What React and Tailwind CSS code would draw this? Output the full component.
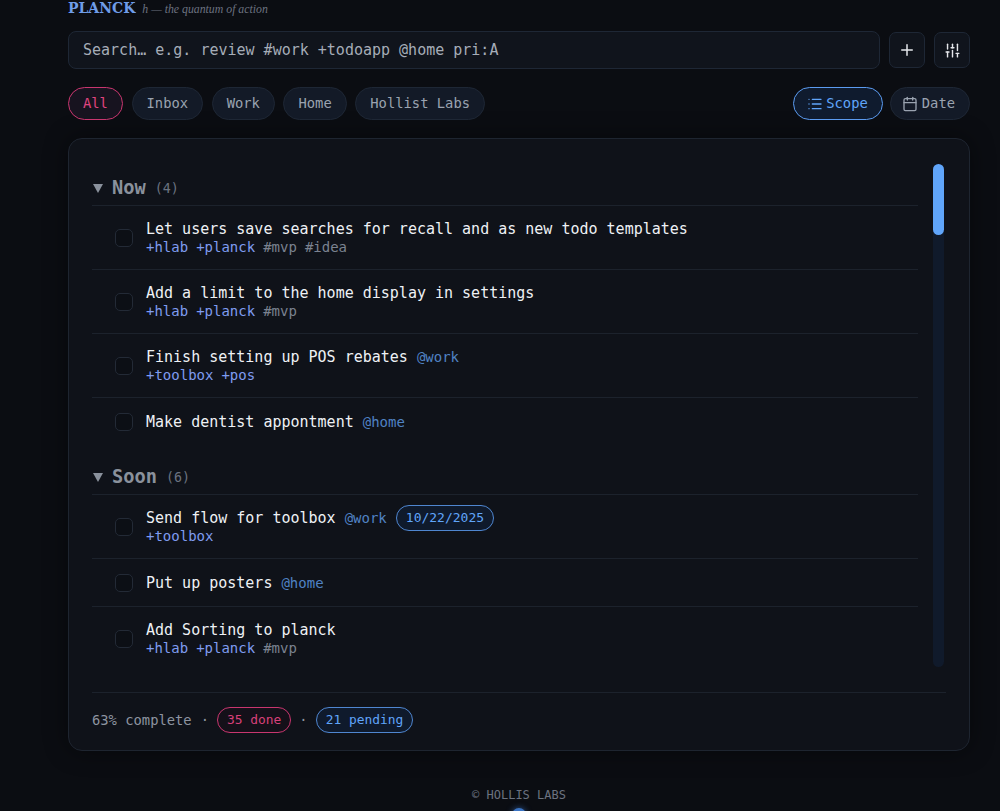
import React from "react";
import { Plus, SlidersVertical, List, Calendar } from "lucide-react";

const mono = "font-['DejaVu_Sans_Mono',monospace]";

function Filter({ children, active }) {
  return (
    <div
      className={
        "h-[33px] px-[14px] flex items-center rounded-full border text-[13.8px] " +
        (active
          ? "border-[#c9366f] bg-[#17131f] text-[#e0447f]"
          : "border-[#1e2735] bg-[#131a27] text-[#9aa3b0]")
      }
    >
      {children}
    </div>
  );
}

function Row({ title, ctx, date, meta, last }) {
  return (
    <div className={"flex items-center gap-[13px] pl-[23px] " + (meta ? "h-[64px] " : "h-[48px] ") + (last ? "" : "border-b border-[#1c222c]")}>
      <div className="w-[18px] h-[18px] rounded-[5px] border border-[#232a36] bg-[#0c0f15] shrink-0" />
      <div className="min-w-0">
        <div className="flex items-center text-[15px] leading-[20px] text-[#eef1f5] whitespace-pre">
          <span>{title}</span>
          {ctx && <span className="ml-[9px] text-[14px] text-[#4f82c4]">{ctx}</span>}
          {date && (
            <span className="ml-[9px] h-[26px] px-[9px] -my-[4px] flex items-center rounded-full border border-[#4f86d0] bg-[#0f1a2c] text-[13px] text-[#60a5fa]">
              {date}
            </span>
          )}
        </div>
        {meta && (
          <div className="-mt-[1px] text-[14px] leading-[18px] whitespace-pre">
            {meta.map((m, i) => (
              <span key={i} className={m[0] === "+" ? "text-[#7f9cf0] mr-[8px]" : "text-[#7b8290] mr-[8px]"}>
                {m}
              </span>
            ))}
          </div>
        )}
      </div>
    </div>
  );
}

function Section({ name, count, className, children }) {
  return (
    <div className={className}>
      <div className="h-[34px] flex items-center border-b border-[#1c222c]">
        <span className="w-0 h-0 border-l-[5px] border-r-[5px] border-t-[9px] border-l-transparent border-r-transparent border-t-[#8a919c] ml-[1px]" />
        <span className="ml-[9px] text-[18.7px] font-bold text-[#8a919c]">{name}</span>
        <span className="ml-[9px] text-[13.3px] text-[#6b7280]">({count})</span>
      </div>
      {children}
    </div>
  );
}

export default function App() {
  return (
    <div className={"h-[811px] overflow-hidden bg-[#0b0d12] " + mono}>
      <div className="px-[68px] pr-[30px]">
        <div className="flex items-baseline h-[15px] pt-[1px]">
          <span className="font-['DejaVu_Serif',serif] font-bold text-[14px] leading-[14px] text-[#6f9ce8]">PLANCK</span>
          <span className="ml-[7px] font-['Liberation_Serif',serif] italic text-[11.8px] leading-[14px] text-[#6b7280]">h — the quantum of action</span>
        </div>

        <div className="mt-[16px] flex items-center">
          <div className="flex-1 h-[38px] px-[14px] pt-[1px] flex items-center rounded-[8px] border border-[#1e2735] bg-[#10141c] text-[15px] text-[#a6adb8]">
            Search… e.g. review #work +todoapp @home pri:A
          </div>
          <div className="ml-[9px] w-[36px] h-[36px] flex items-center justify-center rounded-[7px] border border-[#1e2735] bg-[#10141c] text-[#e5e7eb]">
            <Plus size={18} />
          </div>
          <div className="ml-[9px] w-[36px] h-[36px] flex items-center justify-center rounded-[7px] border border-[#1e2735] bg-[#10141c] text-[#e5e7eb]">
            <SlidersVertical size={17} />
          </div>
        </div>

        <div className="mt-[18px] flex items-center gap-[8.6px]">
          <Filter active>All</Filter>
          <Filter>Inbox</Filter>
          <Filter>Work</Filter>
          <Filter>Home</Filter>
          <Filter>Hollist Labs</Filter>
          <div className="ml-auto flex items-center gap-[7px]">
            <div className="h-[33px] pl-[13px] pr-[14px] flex items-center gap-[3px] rounded-full border border-[#5b9bf0] bg-[#0f1b2e] text-[13.8px] text-[#60a5fa]">
              <List size={16} />
              Scope
            </div>
            <div className="h-[33px] pl-[11px] pr-[14px] flex items-center gap-[4px] rounded-full border border-[#1e2735] bg-[#131a27] text-[13.8px] text-[#9aa3b0]">
              <Calendar size={16} />
              Date
            </div>
          </div>
        </div>

        <div className="mt-[18px] h-[613px] px-[23px] pt-[25px] rounded-[14px] border border-[#1e2530] bg-[#0f1219] shadow-[0_0_24px_rgba(0,0,0,0.45)] flex flex-col">
          <div className="h-[503px] flex">
            <div className="flex-1 min-w-0 overflow-hidden pr-[15px]">
              <Section name="Now" count={4} className="mt-[8px]">
                <Row title="Let users save searches for recall and as new todo templates" meta={["+hlab", "+planck", "#mvp", "#idea"]} />
                <Row title="Add a limit to the home display in settings" meta={["+hlab", "+planck", "#mvp"]} />
                <Row title="Finish setting up POS rebates" ctx="@work" meta={["+toolbox", "+pos"]} />
                <Row title="Make dentist appontment" ctx="@home" last />
              </Section>
              <Section name="Soon" count={6} className="mt-[15px]">
                <Row title="Send flow for toolbox" ctx="@work" date="10/22/2025" meta={["+toolbox"]} />
                <Row title="Put up posters" ctx="@home" />
                <Row title="Add Sorting to planck" meta={["+hlab", "+planck", "#mvp"]} />
              </Section>
            </div>
            <div className="w-[11px] mr-[2px] rounded-full bg-[#101a2b] shrink-0">
              <div className="h-[71px] rounded-full bg-[#60a5fa]" />
            </div>
          </div>

          <div className="mt-[25px] border-t border-[#1c222c] pt-[14px] flex items-center text-[13.8px] text-[#8d94a0]">
            <span>63% complete</span>
            <span className="ml-[9px] mr-[8px]">·</span>
            <span className="h-[26px] px-[9px] flex items-center rounded-full border border-[#c9366f] bg-[#141019] text-[12.9px] text-[#d8407a]">35 done</span>
            <span className="mx-[8px]">·</span>
            <span className="h-[26px] px-[9px] flex items-center rounded-full border border-[#4f86d0] bg-[#0f1a2c] text-[12.9px] text-[#60a5fa]">21 pending</span>
          </div>
        </div>

        <div className="mt-[37px] text-center text-[12px] leading-[14px] text-[#6b7280]">© HOLLIS LABS</div>
        <div className="mt-[6px] mx-auto w-[14px] h-[14px] rounded-full bg-[#3b74c4] shadow-[0_0_6px_rgba(59,116,196,0.7)]" />
      </div>
    </div>
  );
}
